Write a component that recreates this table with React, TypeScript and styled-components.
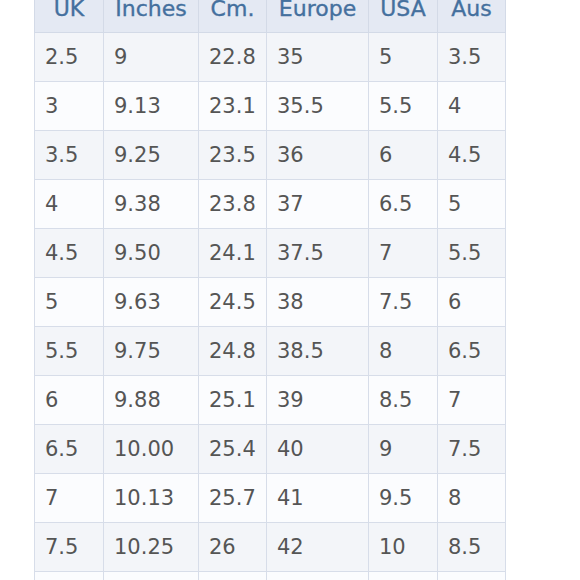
import React from "react";
import styled, { createGlobalStyle } from "styled-components";

const GlobalStyle = createGlobalStyle`
  html, body {
    margin: 0;
    padding: 0;
    background: #ffffff;
    overflow: hidden;
  }
  body {
    font-family: "DejaVu Sans", Verdana, sans-serif;
  }
`;

const Page = styled.div`
  width: 580px;
  height: 580px;
  overflow: hidden;
  background: #ffffff;
`;

const SizeTable = styled.table`
  margin: -17px 0 0 34px;
  border-collapse: collapse;
  table-layout: fixed;
  width: 472px;
  border-left: 1px solid #d7dde9;
  border-right: 1px solid #d7dde9;
`;

const HeadCell = styled.th`
  height: 48px;
  padding: 0;
  background: #e4e9f3;
  color: #44709e;
  font-size: 22px;
  font-weight: normal;
  -webkit-text-stroke: 0.35px currentColor;
  text-align: center;
  border: 1px solid #d3dae7;
`;

const Row = styled.tr<{ $shade: boolean }>`
  background: ${(p) => (p.$shade ? "#f3f5f9" : "#fbfcfe")};
`;

const Cell = styled.td`
  height: 48px;
  padding: 0 0 0 10px;
  color: #555555;
  font-size: 21px;
  text-align: left;
  vertical-align: middle;
  border: 1px solid #d7dde9;
  white-space: nowrap;
`;

const columns = [
  { title: "UK", width: 69 },
  { title: "Inches", width: 95 },
  { title: "Cm.", width: 68 },
  { title: "Europe", width: 102 },
  { title: "USA", width: 69 },
  { title: "Aus", width: 68 },
];

const sizes = [
  ["2.5", "9", "22.8", "35", "5", "3.5"],
  ["3", "9.13", "23.1", "35.5", "5.5", "4"],
  ["3.5", "9.25", "23.5", "36", "6", "4.5"],
  ["4", "9.38", "23.8", "37", "6.5", "5"],
  ["4.5", "9.50", "24.1", "37.5", "7", "5.5"],
  ["5", "9.63", "24.5", "38", "7.5", "6"],
  ["5.5", "9.75", "24.8", "38.5", "8", "6.5"],
  ["6", "9.88", "25.1", "39", "8.5", "7"],
  ["6.5", "10.00", "25.4", "40", "9", "7.5"],
  ["7", "10.13", "25.7", "41", "9.5", "8"],
  ["7.5", "10.25", "26", "42", "10", "8.5"],
  ["8", "10.38", "26.4", "43", "10.5", "9"],
];

export default function App() {
  return (
    <Page>
      <GlobalStyle />
      <SizeTable>
        <colgroup>
          {columns.map((c) => (
            <col key={c.title} style={{ width: c.width }} />
          ))}
        </colgroup>
        <thead>
          <tr>
            {columns.map((c) => (
              <HeadCell key={c.title}>{c.title}</HeadCell>
            ))}
          </tr>
        </thead>
        <tbody>
          {sizes.map((row, i) => (
            <Row key={row[0]} $shade={i % 2 === 0}>
              {row.map((v, j) => (
                <Cell key={j}>{v}</Cell>
              ))}
            </Row>
          ))}
        </tbody>
      </SizeTable>
    </Page>
  );
}
